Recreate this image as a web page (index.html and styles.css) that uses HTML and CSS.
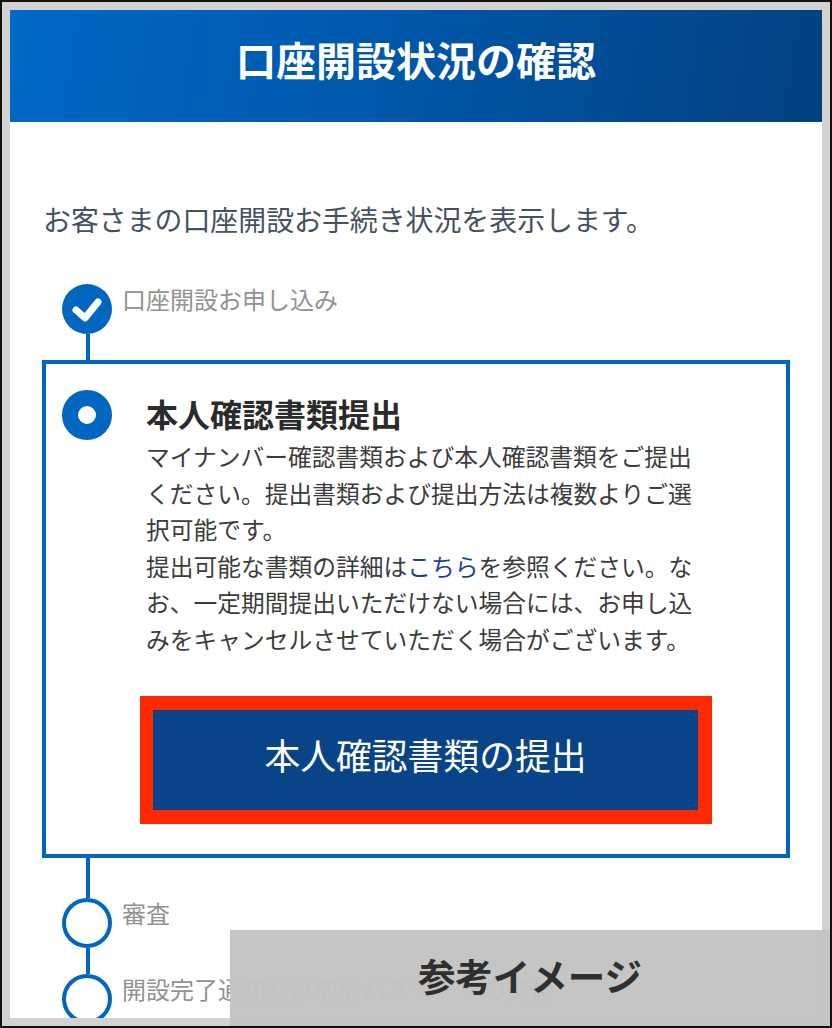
FILE: index.html
```html
<!DOCTYPE html>
<html lang="ja">
<head>
  <meta charset="UTF-8">
  <meta name="viewport" content="width=device-width, initial-scale=1.0">
  <title>口座開設状況の確認</title>
  <link rel="stylesheet" href="styles.css">
</head>
<body>
  <div class="frame">
    <div class="screen">
      <h1 class="header">口座開設状況の確認</h1>
      <p class="intro">お客さまの口座開設お手続き状況を表示します。</p>

      <!-- Steps -->
      <div class="step">
        <div class="marker marker-done">
          <svg width="50" height="50" viewBox="0 0 50 50"><path d="M14 26 L23 34 L36 18" fill="none" stroke="#fff" stroke-width="7" stroke-linecap="round" stroke-linejoin="round"/></svg>
        </div>
        <span class="step-label">口座開設お申し込み</span>
      </div>
      <div class="connector connector-short"></div>

      <div class="current">
        <div class="marker marker-current"></div>
        <div class="current-body">
          <h2 class="current-title">本人確認書類提出</h2>
          <p class="current-text">マイナンバー確認書類および本人確認書類をご提出<br>ください。提出書類および提出方法は複数よりご選<br>択可能です。<br>提出可能な書類の詳細は<a href="#" class="link">こちら</a>を参照ください。な<br>お、一定期間提出いただけない場合には、お申し込<br>みをキャンセルさせていただく場合がございます。</p>
          <a href="#" class="submit">本人確認書類の提出</a>
        </div>
      </div>

      <div class="connector connector-long"></div>
      <div class="step">
        <div class="marker marker-todo"></div>
        <span class="step-label">審査</span>
      </div>
      <div class="connector connector-short"></div>
      <div class="step">
        <div class="marker marker-todo"></div>
        <span class="step-label">開設完了通知及び取引パスワードの交付</span>
      </div>
    </div>
    <div class="sample">参考イメージ</div>
  </div>
</body>
</html>
```

FILE: styles.css
```css
html, body {
  margin: 0;
  padding: 0;
  background: #fff;
}

body {
  font-family: "Noto Sans CJK JP", "Noto Sans", sans-serif;
}

.frame {
  position: relative;
  width: 832px;
  height: 1028px;
  box-sizing: border-box;
  border: 2px solid #111;
  overflow: hidden;
}

.screen {
  height: 1024px;
  box-sizing: border-box;
  border: 8px solid #d2d2d2;
  background: #fff;
  overflow: hidden;
}

.header {
  margin: 0;
  height: 112px;
  line-height: 98px;
  text-align: center;
  font-size: 40px;
  font-weight: 700;
  color: #fff;
  background: linear-gradient(100deg, #0068c6 0%, #0058ac 45%, #03417f 100%);
}

.intro {
  margin: 79px 0 0 33px;
  height: 36px;
  line-height: 36px;
  font-size: 27.9px;
  color: #465160;
  white-space: nowrap;
}

.step {
  display: flex;
  align-items: flex-start;
  margin-left: 52px;
}

.intro + .step {
  margin-top: 47px;
}

.step-label {
  margin-left: 10px;
  font-size: 24px;
  line-height: 30px;
  color: #929292;
  white-space: nowrap;
}

.marker {
  flex: none;
  width: 50px;
  height: 50px;
  box-sizing: border-box;
  border-radius: 50%;
}

.marker-done {
  background: #0066bf;
}

.marker-done svg {
  display: block;
}

.marker-current {
  border: 16px solid #0066bf;
  background: #fff;
}

.marker-todo {
  border: 4px solid #0066bf;
  background: #fff;
}

.connector {
  width: 4px;
  margin-left: 76px;
  background: #0066bf;
}

.connector-short {
  height: 26px;
}

.connector-long {
  height: 40px;
}

.current {
  display: flex;
  width: 748px;
  height: 498px;
  margin-left: 32px;
  box-sizing: border-box;
  border: 4px solid #0066bf;
  padding: 26px 0 0 16px;
}

.current-body {
  margin-left: 35px;
}

.current-title {
  margin: -1px 0 0 -1px;
  font-size: 32px;
  line-height: 48px;
  font-weight: 700;
  color: #2b2b2b;
  white-space: nowrap;
}

.current-text {
  margin: 1px 0 0 -1px;
  font-size: 23.75px;
  line-height: 36.5px;
  color: #3c3c3c;
  white-space: nowrap;
}

.link {
  color: #1d3f9c;
  text-decoration: none;
}

.submit {
  display: block;
  width: 572px;
  height: 128px;
  margin: 39px 0 0 -7px;
  box-sizing: border-box;
  border: solid #ff2a00;
  border-width: 14px 14px 14px 13px;
  background: #0a4488;
  color: #fff;
  font-size: 35.8px;
  line-height: 88px;
  text-align: center;
  text-decoration: none;
}

.sample {
  position: absolute;
  right: 0;
  bottom: 0;
  width: 600px;
  height: 96px;
  background: rgba(195, 195, 195, 0.97);
  color: #2f2f2f;
  font-size: 37.5px;
  font-weight: 700;
  line-height: 90px;
  text-align: center;
}
```
